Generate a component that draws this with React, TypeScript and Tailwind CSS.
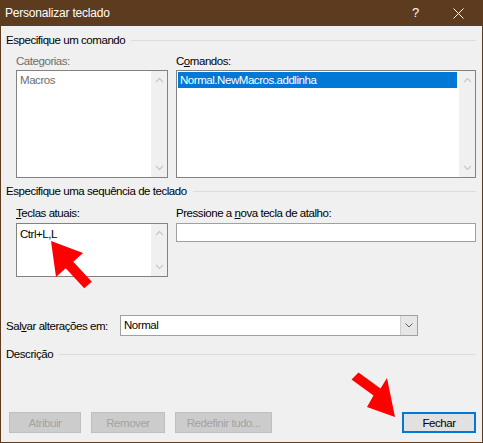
import type { ReactNode } from "react";

const font = "font-['Segoe_UI','Liberation_Sans',sans-serif]";

function SectionHeader({ children }: { children: ReactNode }) {
  return (
    <div className="flex h-4 items-center gap-1.5">
      <span className="whitespace-nowrap">{children}</span>
      <div className="h-px flex-1 bg-[#dcdcdc]" />
    </div>
  );
}

function Chevron({ up }: { up?: boolean }) {
  return (
    <svg width="9" height="6" viewBox="0 0 9 6" className="text-[#c6c6c6]">
      <path
        d={up ? "M1 5 L4.5 1.5 L8 5" : "M1 1 L4.5 4.5 L8 1"}
        fill="none"
        stroke="currentColor"
        strokeWidth="1.1"
      />
    </svg>
  );
}

function ScrollColumn() {
  return (
    <div className="flex w-[16px] flex-col items-center justify-between bg-[#f0f0f0] py-[6px]">
      <Chevron up />
      <Chevron />
    </div>
  );
}

function ListBox({
  className,
  children,
}: {
  className: string;
  children?: ReactNode;
}) {
  return (
    <div className={`flex border border-[#828282] bg-white ${className}`}>
      <div className="min-w-0 flex-1 p-px">{children}</div>
      <ScrollColumn />
    </div>
  );
}

function DialogButton({
  label,
  width,
  disabled,
}: {
  label: string;
  width: string;
  disabled?: boolean;
}) {
  if (disabled) {
    return (
      <div
        className={`flex h-[21px] items-center justify-center border border-[#bfbfbf] bg-[#cccccc] text-[#a3a3a3] ${width}`}
      >
        {label}
      </div>
    );
  }
  return (
    <div
      className={`flex h-[21px] items-center justify-center border-2 border-[#0078d7] bg-[#e1e1e1] ${width}`}
    >
      {label}
    </div>
  );
}

function Arrows() {
  return (
    <svg
      width="483"
      height="443"
      className="pointer-events-none absolute left-0 top-0"
    >
      <polygon
        points="51,241 83,253 73.3,261.8 91.8,281.8 84.2,288.2 65.7,268.2 56,277"
        fill="#ff0000"
      />
      <polygon
        points="395,417 367,407 373.5,395.5 351.5,379.5 358.5,372.5 380.5,388.5 387,378"
        fill="#ff0000"
      />
    </svg>
  );
}

export default function App() {
  return (
    <div
      className={`relative flex h-[443px] w-[483px] flex-col bg-[#5c3b1e] px-px pb-px text-[11.5px] leading-4 tracking-[-0.45px] text-black ${font}`}
    >
      {/* title bar */}
      <div className="flex h-[26px] items-center pl-[4px] text-[12px] tracking-[-0.2px] text-white">
        <span className="flex-1">Personalizar teclado</span>
        <span className="mr-[34px] text-[13px]">?</span>
        <svg width="11" height="11" viewBox="0 0 11 11" className="mr-[18px]">
          <path d="M0.5 0.5 L10.5 10.5 M10.5 0.5 L0.5 10.5" stroke="white" strokeWidth="1" />
        </svg>
      </div>

      <div className="flex flex-1 flex-col bg-[#f0f0f0] pl-[5px] pr-[6px] pt-[6px]">
        <SectionHeader>Especifique um comando</SectionHeader>

        <div className="ml-[10px] mt-[5px] flex gap-2">
          <div className="flex w-[152px] flex-col">
            <span className="text-[#6d6d6d]">Categorias:</span>
            <ListBox className="mt-px h-[108px]">
              <div className="pl-[2px] text-[#6d6d6d]">Macros</div>
            </ListBox>
          </div>
          <div className="flex w-[300px] flex-col">
            <span>
              C<span className="underline">o</span>mandos:
            </span>
            <ListBox className="mt-px h-[108px]">
              <div className="mr-px bg-[#0078d7] pl-[2px] text-white">
                Normal.NewMacros.addlinha
              </div>
            </ListBox>
          </div>
        </div>

        <div className="mt-[5px]">
          <SectionHeader>Especifique uma sequência de teclado</SectionHeader>
        </div>

        <div className="ml-[10px] mt-[6px] flex gap-2">
          <div className="flex w-[152px] flex-col">
            <span>
              <span className="underline">T</span>eclas atuais:
            </span>
            <ListBox className="mt-[2px] h-[54px]">
              <div className="pl-[2px] pt-px">Ctrl+L,L</div>
            </ListBox>
          </div>
          <div className="flex w-[300px] flex-col">
            <span>
              Pressione a <span className="underline">n</span>ova tecla de atalho:
            </span>
            <div className="mt-[2px] h-[19px] border border-[#a0a0a0] bg-white" />
          </div>
        </div>

        <div className="mt-[38px] flex h-[21px] items-center">
          <span className="w-[114px] whitespace-nowrap">
            Sal<span className="underline">v</span>ar alterações em:
          </span>
          <div className="flex h-[21px] w-[298px] border border-[#a0a0a0] bg-white">
            <span className="flex-1 pl-[3px] leading-[19px]">Normal</span>
            <div className="flex w-[17px] items-center justify-center border-l border-[#cfcfcf] bg-[#e6e6e6]">
              <svg width="8" height="5" viewBox="0 0 8 5">
                <path d="M0.5 0.5 L4 4 L7.5 0.5" fill="none" stroke="#606060" strokeWidth="1" />
              </svg>
            </div>
          </div>
        </div>

        <div className="mt-[10px]">
          <SectionHeader>Descrição</SectionHeader>
        </div>

        <div className="mb-[9px] mt-auto flex items-center">
          <div className="ml-[3px] flex gap-[10px]">
            <DialogButton label="Atribuir" width="w-[72px]" disabled />
            <DialogButton label="Remover" width="w-[74px]" disabled />
            <DialogButton label="Redefinir tudo..." width="w-[97px]" disabled />
          </div>
          <div className="ml-auto">
            <DialogButton label="Fechar" width="w-[74px]" />
          </div>
        </div>
      </div>

      <Arrows />
    </div>
  );
}
